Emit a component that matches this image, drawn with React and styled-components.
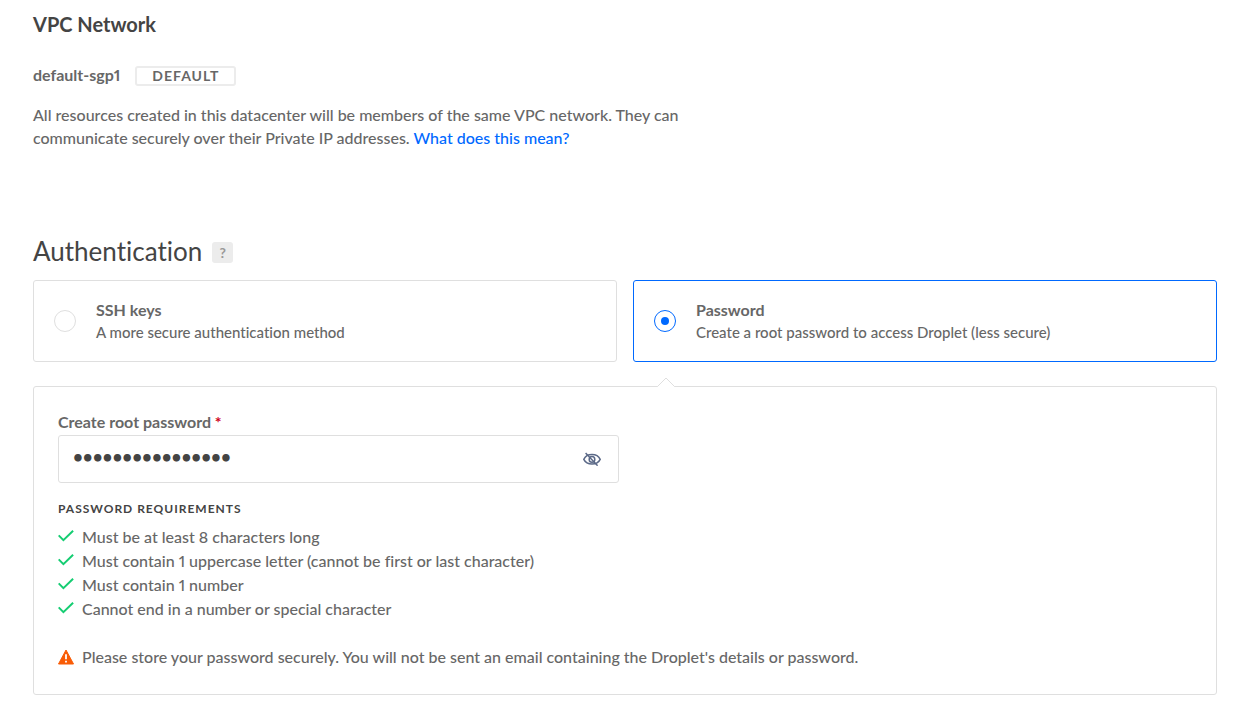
import React, { useState } from "react";
import styled, { createGlobalStyle } from "styled-components";

const GlobalStyle = createGlobalStyle`
  *, *::before, *::after { box-sizing: border-box; }
  body {
    margin: 0;
    background: #fff;
    color: #676767;
    font-family: Lato, "Liberation Sans", sans-serif;
    font-size: 16px;
    font-weight: 500;
    font-variant-ligatures: none;
    font-variant-numeric: proportional-nums;
    line-height: 23px;
  }
`;

const Page = styled.main`
  padding: 7px 34px 16px 33px;
`;

const Heading = styled.h3`
  margin: 0 0 22px;
  color: #444;
  font-size: 20px;
  font-weight: 700;
  line-height: 34px;
`;

const NetworkRow = styled.div`
  display: flex;
  align-items: flex-end;
  gap: 15px;
`;

const NetworkName = styled.span`
  font-weight: 700;
`;

const Tag = styled.span`
  padding: 0 15px;
  border: 2px solid #ececec;
  border-radius: 3px;
  font-size: 14px;
  font-weight: 700;
  line-height: 16px;
  letter-spacing: 1px;
`;

const Description = styled.p`
  max-width: 664px;
  margin: 17px 0 83px;
`;

const Link = styled.a`
  color: #0069ff;
  text-decoration: none;
`;

const SectionHeader = styled.header`
  display: flex;
  align-items: flex-start;
  gap: 10px;
  min-height: 40px;
  margin-bottom: 8px;
`;

const SectionTitle = styled.h2`
  margin: 0;
  color: #444;
  font-size: 26px;
  font-weight: 400;
  line-height: 38px;
`;

const HelpButton = styled.button`
  align-self: center;
  width: 21px;
  height: 21px;
  padding: 0;
  border: 0;
  border-radius: 3px;
  background: #ececec;
  color: #999;
  font: 700 14px/21px Lato, "Liberation Sans", sans-serif;
`;

const Options = styled.div`
  display: grid;
  grid-template-columns: 1fr 1fr;
  gap: 16px;
`;

const OptionCard = styled.label`
  display: flex;
  align-items: center;
  gap: 20px;
  min-height: 82px;
  padding: 0 20px;
  border: 1px solid ${(p) => (p.$selected ? "#0069ff" : "#dfdfdf")};
  border-radius: 3px;
  cursor: pointer;
`;

const Radio = styled.input`
  appearance: none;
  flex: none;
  width: 22px;
  height: 22px;
  margin: 0;
  border: 1px solid #dfdfdf;
  border-radius: 50%;
  display: grid;
  place-items: center;

  &:checked { border-color: #0069ff; }
  &:checked::before {
    content: "";
    width: 8px;
    height: 8px;
    border-radius: 50%;
    background: #0069ff;
  }
`;

const OptionText = styled.span`
  display: flex;
  flex-direction: column;
  font-size: 15px;
`;

const OptionTitle = styled.strong`
  font-size: 16px;
  font-weight: 700;
`;

const Panel = styled.section`
  position: relative;
  margin-top: 24px;
  padding: 23px 24px 25px;
  border: 1px solid #dfdfdf;
  border-radius: 3px;
`;

const Notch = styled.svg`
  position: absolute;
  top: -10px;
  left: calc(50% + 31px);
`;

const FieldLabel = styled.label`
  display: block;
  margin-bottom: 1px;
  font-weight: 700;
  line-height: 24px;
`;

const Required = styled.span`
  color: #d0021b;
`;

const Field = styled.div`
  display: flex;
  align-items: center;
  width: calc(50% - 6px);
  height: 48px;
  padding: 0 14px;
  border: 1px solid #dfdfdf;
  border-radius: 3px;
`;

const PasswordInput = styled.input`
  flex: 1;
  min-width: 0;
  height: 44px;
  padding: 0 0 6px;
  border: 0;
  outline: 0;
  background: none;
  color: #444;
  font-family: Lato, "Liberation Sans", sans-serif;
  font-size: 17px;
  font-weight: 700;
`;

const IconButton = styled.button`
  display: flex;
  padding: 0 3px;
  border: 0;
  background: none;
  color: #5b6987;
`;

const RequirementsTitle = styled.h4`
  margin: 18px 0 8px;
  color: #444;
  font-size: 12px;
  font-weight: 700;
  line-height: 16px;
  letter-spacing: 1px;
  text-transform: uppercase;
`;

const Requirements = styled.ul`
  margin: 0 0 24px;
  padding: 0;
  list-style: none;
`;

const Requirement = styled.li`
  display: flex;
  gap: 8px;
  line-height: 24px;
`;

const Warning = styled.p`
  display: flex;
  align-items: center;
  gap: 8px;
  margin: 0;
  line-height: 24px;
`;

const LineIcon = styled.svg`
  flex: none;
`;

const options = [
  { id: "ssh", title: "SSH keys", text: "A more secure authentication method" },
  { id: "password", title: "Password", text: "Create a root password to access Droplet (less secure)" },
];

const requirements = [
  "Must be at least 8 characters long",
  "Must contain 1 uppercase letter (cannot be first or last character)",
  "Must contain 1 number",
  "Cannot end in a number or special character",
];

function CheckIcon() {
  return (
    <LineIcon width="16" height="20" viewBox="0 0 16 20" fill="none" stroke="#15cd72" strokeWidth="2" aria-hidden="true">
      <path d="M0.7 10.4 L5.4 15.2 L15.1 5.8" />
    </LineIcon>
  );
}

function WarningIcon() {
  return (
    <LineIcon width="16" height="16" viewBox="0 0 16 16" aria-hidden="true">
      <path d="M8 1 L15.5 15 H0.5 Z" fill="#f95c06" stroke="#f95c06" strokeLinejoin="round" />
      <path d="M8 5.2 V10.2 M8 11.8 V13.6" stroke="#fff" strokeWidth="1.8" />
    </LineIcon>
  );
}

function HiddenEyeIcon() {
  return (
    <LineIcon width="18" height="14" viewBox="0 0 18 14" fill="none" stroke="currentColor" strokeWidth="1.5" aria-hidden="true">
      <path d="M0.8 7.4 C3.8 1 14.2 1 17.2 7.4 C14.2 13.6 3.8 13.6 0.8 7.4 Z" />
      <circle cx="9" cy="7.4" r="2.8" />
      <path d="M2.6 0.9 L14.6 13.7" />
    </LineIcon>
  );
}

export default function App() {
  const [method, setMethod] = useState("password");
  const [password, setPassword] = useState("aBcdefghijklmnop");
  const [visible, setVisible] = useState(false);

  return (
    <>
      <GlobalStyle />
      <Page>
        <Heading>VPC Network</Heading>
        <NetworkRow>
          <NetworkName>default-sgp1</NetworkName>
          <Tag>DEFAULT</Tag>
        </NetworkRow>
        <Description>
          All resources created in this datacenter will be members of the same VPC network. They can
          communicate securely over their Private IP addresses. <Link href="#vpc">What does this mean?</Link>
        </Description>

        <SectionHeader>
          <SectionTitle>Authentication</SectionTitle>
          <HelpButton type="button">?</HelpButton>
        </SectionHeader>
        <Options>
          {options.map((o) => (
            <OptionCard key={o.id} $selected={method === o.id}>
              <Radio type="radio" name="method" checked={method === o.id} onChange={() => setMethod(o.id)} />
              <OptionText>
                <OptionTitle>{o.title}</OptionTitle>
                {o.text}
              </OptionText>
            </OptionCard>
          ))}
        </Options>

        <Panel>
          <Notch width="20" height="11" viewBox="0 0 20 11" aria-hidden="true">
            <path d="M1 10 L10 1 L19 10 V11 H1 Z" fill="#fff" />
            <path d="M0.5 9.5 L1.5 9.5 L10 1 L18.5 9.5 L19.5 9.5" fill="none" stroke="#dfdfdf" />
          </Notch>
          <FieldLabel htmlFor="root-password">
            Create root password <Required>*</Required>
          </FieldLabel>
          <Field>
            <PasswordInput
              id="root-password"
              type={visible ? "text" : "password"}
              value={password}
              onChange={(e) => setPassword(e.target.value)}
            />
            <IconButton type="button" aria-label="Toggle password visibility" onClick={() => setVisible(!visible)}>
              <HiddenEyeIcon />
            </IconButton>
          </Field>
          <RequirementsTitle>Password requirements</RequirementsTitle>
          <Requirements>
            {requirements.map((text) => (
              <Requirement key={text}>
                <CheckIcon />
                {text}
              </Requirement>
            ))}
          </Requirements>
          <Warning>
            <WarningIcon />
            Please store your password securely. You will not be sent an email containing the Droplet's details or
            password.
          </Warning>
        </Panel>
      </Page>
    </>
  );
}
